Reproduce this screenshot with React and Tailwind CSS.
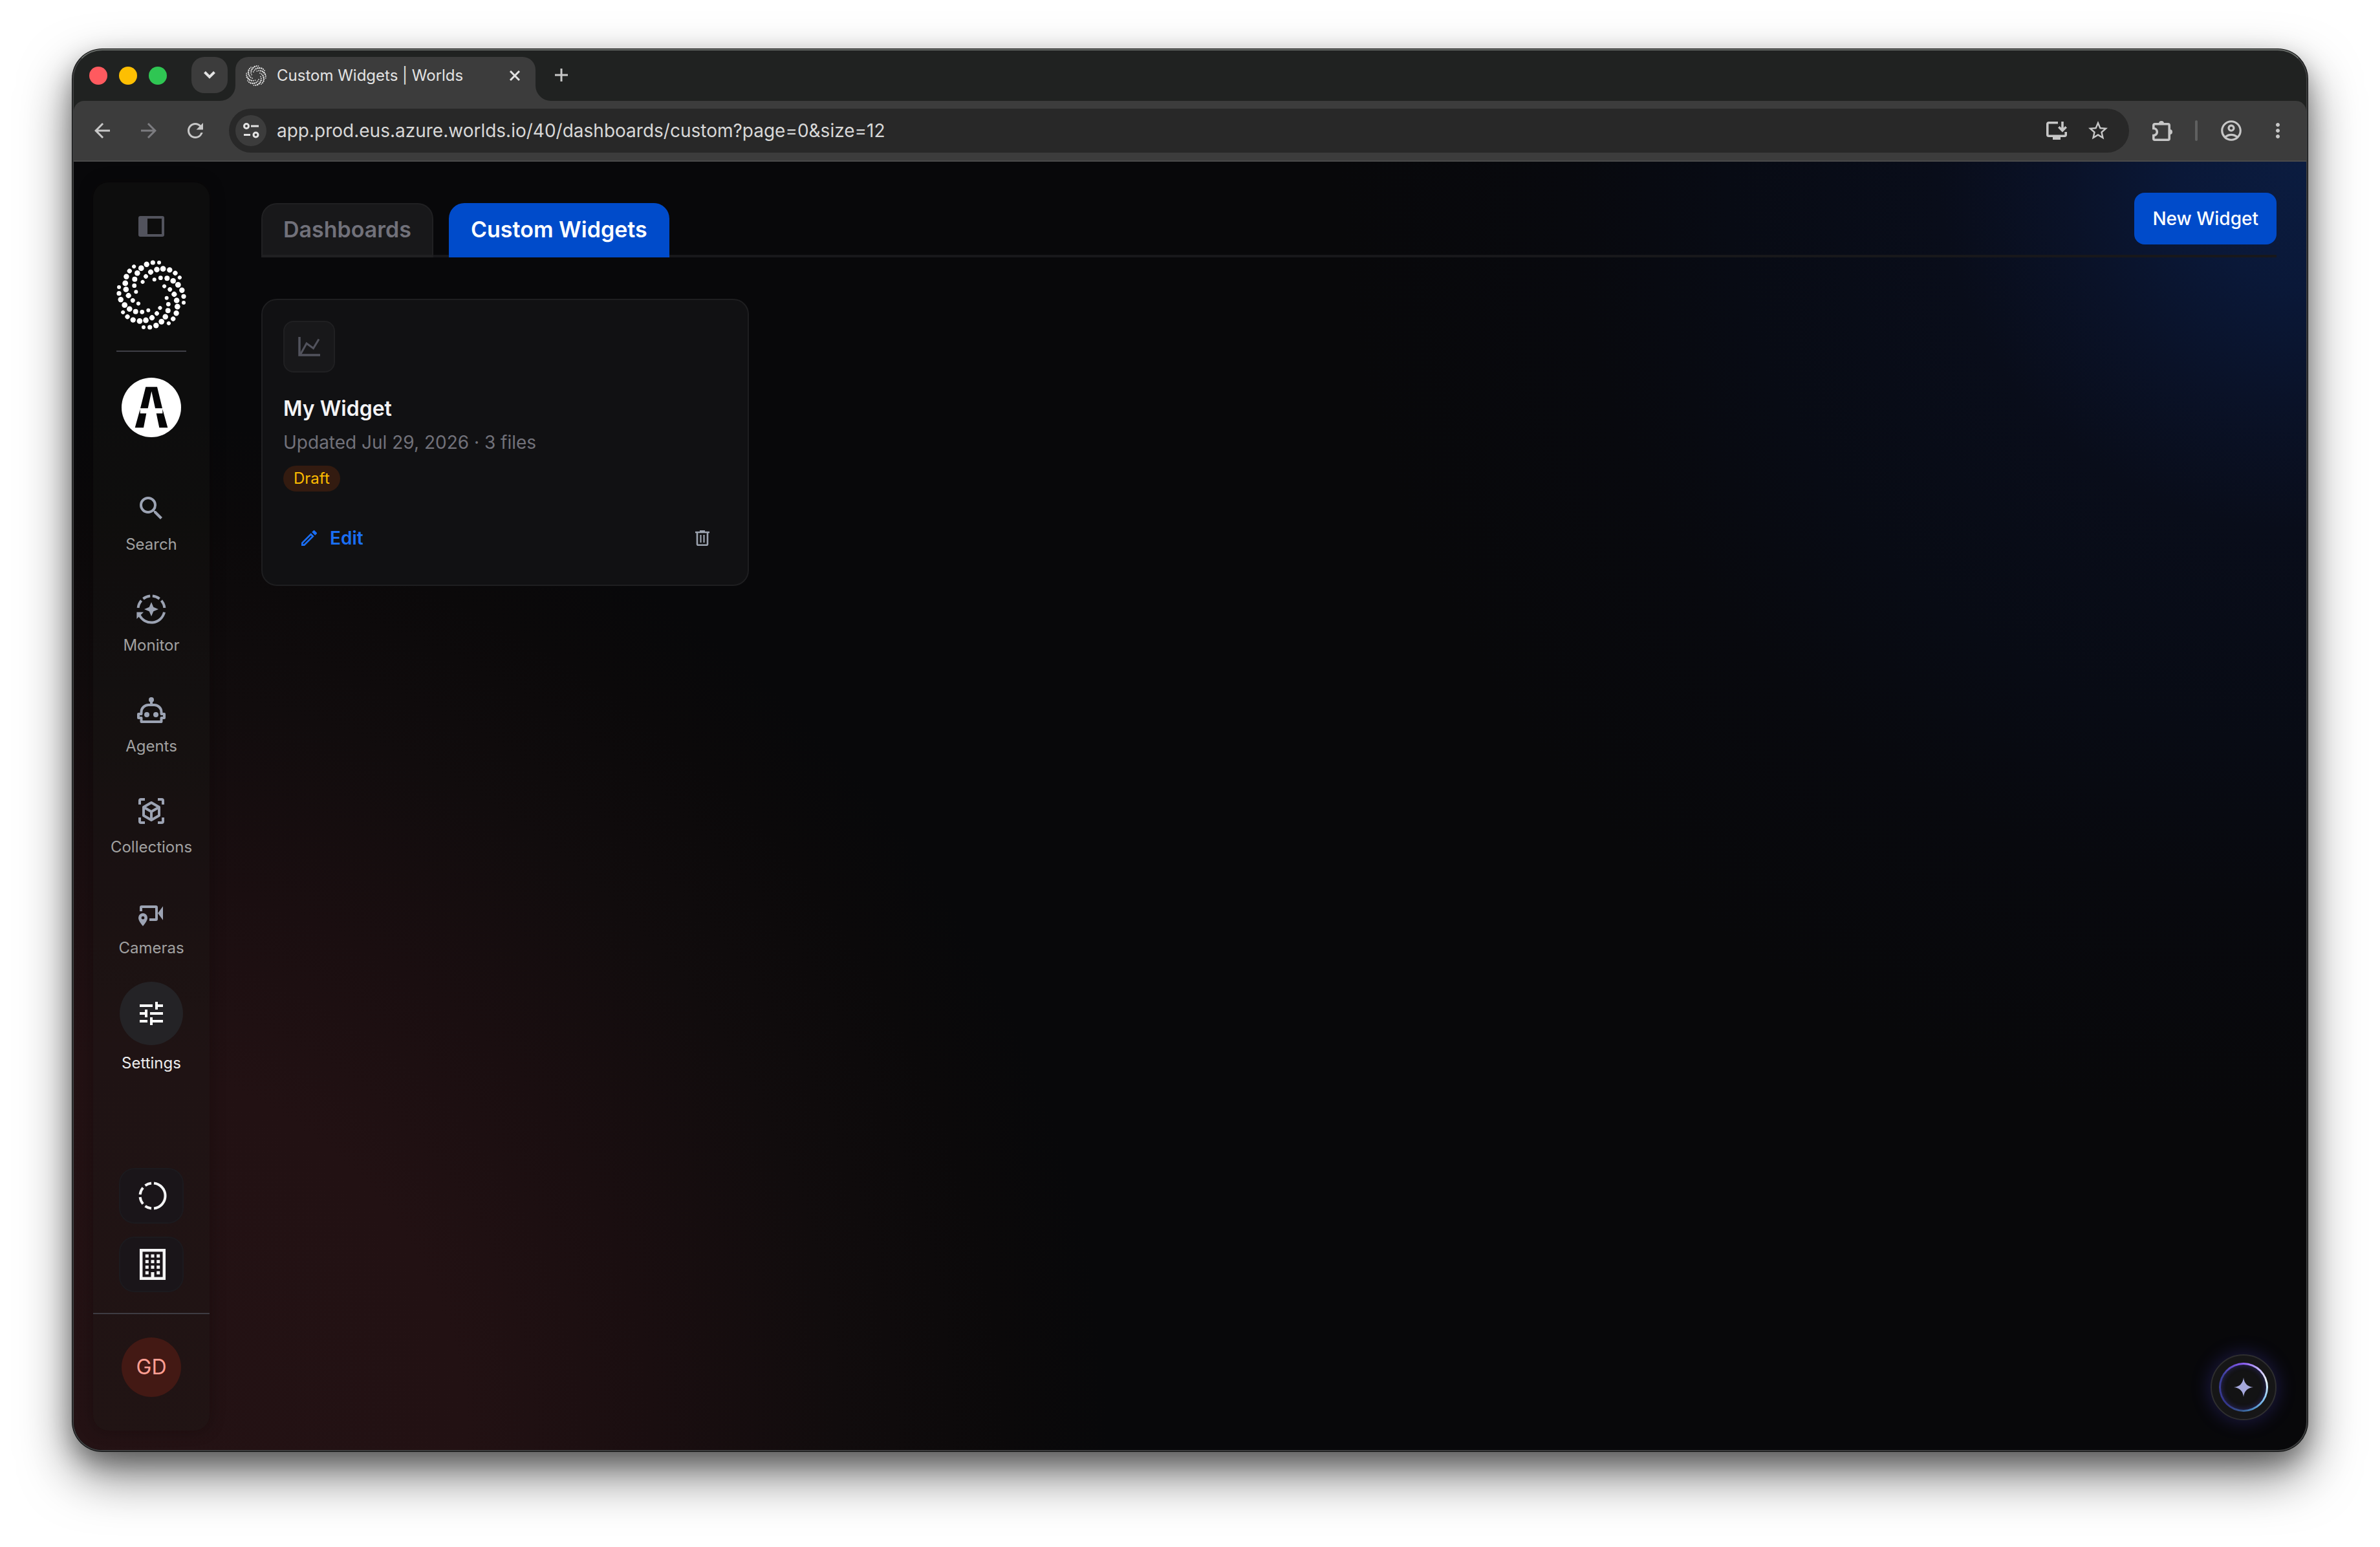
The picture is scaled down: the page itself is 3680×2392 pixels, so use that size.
import {
  MdArrowBack,
  MdArrowForward,
  MdMoreVert,
  MdOutlineAccountCircle,
  MdOutlineEdit,
  MdRefresh,
  MdSearch,
  MdStarBorder,
  MdTune,
} from "react-icons/md";

// one arm of the Worlds swirl, [x, y, radius] around the centre
const SWIRL_ARM = [
  [12, -50, 3],
  [2.3, -50, 3.6],
  [-7.3, -47.3, 4.2],
  [-15.7, -41.3, 4.4],
  [-21.7, -33.7, 4.3],
  [-25.7, -24.3, 4],
  [-26.3, -14.3, 3.4],
  [-23.7, -4.7, 3],
];

const SWIRL_ANGLES = [0, 45, 90, 135, 180, 225, 270, 315];

function WorldsLogo({ className }) {
  return (
    <svg viewBox="-54 -54 108 108" fill="currentColor" className={className}>
      {SWIRL_ANGLES.map((angle) => (
        <g key={angle} transform={`rotate(${angle})`}>
          {SWIRL_ARM.map(([x, y, r]) => (
            <circle key={`${x}${y}`} cx={x} cy={y} r={r} />
          ))}
        </g>
      ))}
    </svg>
  );
}

function TenantLogo() {
  return (
    <svg viewBox="0 0 92 92" className="size-[92px]">
      <circle cx="46" cy="46" r="46" fill="#fff" />
      <g fill="#060607">
        <path d="M37.3 14.3H55L63 47.3H52L46.3 21L40.7 47.3H29Z" />
        <path d="M28.7 48.5V55.3H38.3L34 77.3H20.7Z" />
        <path d="M63.3 48.5V55.3H53.7L58.3 77.3H71.3Z" />
      </g>
    </svg>
  );
}

function SidebarToggleIcon() {
  return (
    <svg viewBox="0 0 40 32" className="h-8 w-10">
      <rect x="2" y="2" width="36" height="28" rx="1" fill="none" stroke="currentColor" strokeWidth="4" />
      <path d="M2 2H14V30H2Z" fill="currentColor" />
    </svg>
  );
}

function MonitorIcon() {
  return (
    <svg viewBox="0 0 48 48" className="size-12">
      <g fill="none" stroke="currentColor" strokeWidth="4">
        <path d="M3.6 21.9A20.5 20.5 0 0 1 8.5 10.6" />
        <path d="M11.4 7.8A20.5 20.5 0 0 1 22.2 3.6" />
        <path d="M25.8 3.6A20.5 20.5 0 0 1 36.6 7.8" />
        <path d="M39.5 10.6A20.5 20.5 0 0 1 44.4 21.9" />
        <path d="M44 28.6A20.5 20.5 0 0 1 5.4 32.7" />
      </g>
      <path d="M1.4 28.5H12L1.4 39Z" fill="currentColor" />
      <path
        d="M24 13L27.3 20.7L35 24L27.3 27.3L24 35L20.7 27.3L13 24L20.7 20.7Z"
        fill="currentColor"
      />
    </svg>
  );
}

function AgentsIcon() {
  return (
    <svg viewBox="0 0 48 48" className="size-12">
      <path
        d="M8.5 30H4V36H8.5V42H39.5V36H44V30H39.5V27A11 11 0 0 0 28.5 16H19.5A11 11 0 0 0 8.5 27Z"
        fill="none"
        stroke="currentColor"
        strokeWidth="4"
        strokeLinejoin="round"
      />
      <path d="M24 8V15" stroke="currentColor" strokeWidth="4" />
      <circle cx="24" cy="8" r="4" fill="currentColor" />
      <circle cx="17" cy="31" r="4" fill="currentColor" />
      <circle cx="31" cy="31" r="4" fill="currentColor" />
    </svg>
  );
}

function CollectionsIcon() {
  return (
    <svg viewBox="0 0 48 48" className="size-12" fill="none" stroke="currentColor" strokeWidth="4">
      <path d="M6 14V8A2 2 0 0 1 8 6H14M34 6H40A2 2 0 0 1 42 8V14M42 34V40A2 2 0 0 1 40 42H34M14 42H8A2 2 0 0 1 6 40V34" />
      <path
        d="M24 11L36 18V31L24 38L12 31V18ZM12 18L24 25L36 18M24 25V38"
        strokeLinejoin="round"
      />
    </svg>
  );
}

function CamerasIcon() {
  return (
    <svg viewBox="0 0 48 48" className="size-12" fill="currentColor">
      <path
        d="M8 23V17A1 1 0 0 1 9 16H31A1 1 0 0 1 32 17V35A1 1 0 0 1 31 36H21"
        fill="none"
        stroke="currentColor"
        strokeWidth="4"
      />
      <path d="M34 26L42 15.3V36.7Z" />
      <path
        fillRule="evenodd"
        d="M11 46C7 41 4 37 4 33A7 7 0 0 1 18 33C18 37 15 41 11 46ZM11 30.8A2.4 2.4 0 1 0 11 35.6A2.4 2.4 0 1 0 11 30.8Z"
      />
    </svg>
  );
}

function RingIcon() {
  return (
    <svg viewBox="0 0 48 48" className="size-12" fill="none" stroke="currentColor" strokeWidth="4">
      <path d="M26 4.6A19.5 19.5 0 0 1 26 43.4" />
      <path d="M22 4.6A19.5 19.5 0 0 0 12.5 8.2M9.1 11.5A19.5 19.5 0 0 0 4.6 22" />
      <path d="M22 43.4A19.5 19.5 0 0 1 12.5 39.8M9.1 36.5A19.5 19.5 0 0 1 4.6 26" />
    </svg>
  );
}

function BuildingIcon() {
  return (
    <svg viewBox="0 0 48 48" className="size-12" fill="currentColor">
      <rect x="6.2" y="2.2" width="35.6" height="43.6" fill="none" stroke="currentColor" strokeWidth="4.5" />
      {[8.5, 17.2, 25.8, 34.5].map((y) => (
        <g key={y}>
          <rect x="12.8" y={y} width="5" height="5" />
          {y < 30 ? <rect x="21.5" y={y} width="5" height="5" /> : null}
          <rect x="30.2" y={y} width="5" height="5" />
        </g>
      ))}
      <rect x="21.5" y="36" width="5" height="9" />
    </svg>
  );
}

function ChartLineIcon() {
  return (
    <svg viewBox="0 0 36 32" className="h-8 w-9" fill="none" stroke="currentColor">
      <path d="M3 1V29H35" strokeWidth="3.5" />
      <path d="M4.5 28L14 11L24.5 18.5L33 4.5" strokeWidth="3" />
    </svg>
  );
}

function TrashIcon() {
  return (
    <svg viewBox="0 0 22 24" className="h-6 w-[22px]" fill="none" stroke="currentColor">
      <path d="M0 3H22M7 1.2H15" strokeWidth="2.4" />
      <path d="M3 4V21.2A1.5 1.5 0 0 0 4.5 22.7H17.5A1.5 1.5 0 0 0 19 21.2V4" strokeWidth="2.6" />
      <path d="M8.5 7V19M13.5 7V19" strokeWidth="2.2" />
    </svg>
  );
}

function SiteInfoIcon() {
  return (
    <svg viewBox="0 0 32 32" className="size-8" fill="none" stroke="currentColor" strokeWidth="3">
      <circle cx="9" cy="9" r="3.5" />
      <path d="M16 9H28M5 22.5H15" />
      <circle cx="23.5" cy="22.5" r="3.5" />
    </svg>
  );
}

function InstallIcon() {
  return (
    <svg viewBox="0 0 32 28" className="h-7 w-8" fill="none" stroke="currentColor" strokeWidth="3.6">
      <path d="M18 1.8H3.8A2 2 0 0 0 1.8 3.8V20.2A2 2 0 0 0 3.8 22.2H28.2A2 2 0 0 0 30.2 20.2V16" />
      <path d="M25 0V14M19.3 8.3L25 14L30.7 8.3" />
      <path d="M10 23H22V28H10Z" fill="currentColor" stroke="none" />
    </svg>
  );
}

function ExtensionIcon() {
  return (
    <svg viewBox="0 0 32 32" className="size-8">
      <path
        d="M1.8 12.5V7.8A2 2 0 0 1 3.8 5.8H24.2A2 2 0 0 1 26.2 7.8V28.2A2 2 0 0 1 24.2 30.2H3.8A2 2 0 0 1 1.8 28.2V23.5A5.4 5.4 0 0 0 1.8 12.5Z"
        fill="none"
        stroke="currentColor"
        strokeWidth="3.6"
      />
      <path d="M10 5A4 4 0 0 1 18 5ZM27 14A4 4 0 0 1 27 22Z" fill="currentColor" />
    </svg>
  );
}

const NAV_ITEMS = [
  { label: "Search", icon: <MdSearch size={48} /> },
  { label: "Monitor", icon: <MonitorIcon /> },
  { label: "Agents", icon: <AgentsIcon /> },
  { label: "Collections", icon: <CollectionsIcon /> },
  { label: "Cameras", icon: <CamerasIcon /> },
];

function TabStrip() {
  return (
    <div className="flex h-[78px] items-end pl-6">
      <div className="flex h-full items-center gap-[18px]">
        <button aria-label="Close window" className="size-7 rounded-full bg-[#ff5a5f]" />
        <button aria-label="Minimize window" className="size-7 rounded-full bg-[#fdbf02]" />
        <button aria-label="Zoom window" className="size-7 rounded-full bg-[#2fc653]" />
      </div>

      <button
        aria-label="Search tabs"
        className="mb-3 ml-[38px] flex size-14 items-center justify-center rounded-[20px] bg-[#3c3c3c] text-[#e3e3e3]"
      >
        <svg viewBox="0 0 18 12" className="h-3 w-[18px]" fill="none" stroke="currentColor" strokeWidth="4">
          <path d="M1.5 1.5L9 9L16.5 1.5" />
        </svg>
      </button>

      <div className="relative ml-3 flex h-[68px] w-[464px] items-center rounded-t-[20px] bg-[#3c3c3c] pr-6 pb-[10px] pl-4 text-[#e3e3e3]">
        <svg viewBox="0 0 24 24" className="absolute bottom-0 -left-6 size-6" fill="#3c3c3c">
          <path d="M24 0V24H0A24 24 0 0 0 24 0Z" />
        </svg>
        <svg viewBox="0 0 24 24" className="absolute -right-6 bottom-0 size-6" fill="#3c3c3c">
          <path d="M0 0V24H24A24 24 0 0 1 0 0Z" />
        </svg>
        <WorldsLogo className="size-8" />
        <span className="ml-4 flex-1 text-[24px] leading-8">Custom Widgets | Worlds</span>
        <button aria-label="Close tab">
          <svg viewBox="0 0 16 16" className="size-4" stroke="currentColor" strokeWidth="3">
            <path d="M1 1L15 15M15 1L1 15" />
          </svg>
        </button>
      </div>

      <button aria-label="New tab" className="mb-[30px] ml-[30px] text-[#c7c7c7]">
        <svg viewBox="0 0 20 20" className="size-5" stroke="currentColor" strokeWidth="3">
          <path d="M10 0V20M0 10H20" />
        </svg>
      </button>
    </div>
  );
}

function Toolbar() {
  return (
    <div className="flex h-[94px] items-center rounded-t-[16px] border-b-2 border-[#4a4a4a] bg-[#3c3c3c] px-5 text-[#c7c7c7]">
      <div className="flex gap-6">
        <button aria-label="Back" className="flex size-12 items-center justify-center">
          <MdArrowBack size={36} />
        </button>
        <button aria-label="Forward" className="flex size-12 items-center justify-center text-[#7c7c80]">
          <MdArrowForward size={36} />
        </button>
        <button aria-label="Reload" className="flex size-12 items-center justify-center">
          <MdRefresh size={36} />
        </button>
      </div>

      <div className="ml-7 flex h-[68px] flex-1 items-center rounded-full bg-[#282828] pr-6 pl-[10px]">
        <button
          aria-label="Site information"
          className="flex size-12 items-center justify-center rounded-full bg-[#3c3c3c] text-[#e3e3e3]"
        >
          <SiteInfoIcon />
        </button>
        <input
          type="text"
          aria-label="Address"
          defaultValue="app.prod.eus.azure.worlds.io/40/dashboards/custom?page=0&size=12"
          className="ml-4 min-w-0 flex-1 bg-transparent text-[28px] text-[#d8d8d8] outline-none"
        />
        <button aria-label="Install app" className="flex size-12 items-center justify-center">
          <InstallIcon />
        </button>
        <button aria-label="Bookmark this page" className="ml-4 flex size-12 items-center justify-center">
          <MdStarBorder size={36} />
        </button>
      </div>

      <button aria-label="Extensions" className="ml-7 flex size-12 items-center justify-center">
        <ExtensionIcon />
      </button>
      <span className="mr-7 ml-[26px] h-8 w-1 rounded-full bg-[#5f6060]" />
      <button aria-label="Profile" className="flex size-12 items-center justify-center">
        <MdOutlineAccountCircle size={38} />
      </button>
      <button aria-label="Menu" className="ml-6 flex size-12 items-center justify-center">
        <MdMoreVert size={36} />
      </button>
    </div>
  );
}

function Sidebar() {
  return (
    <aside className="flex w-[180px] shrink-0 flex-col items-center rounded-[24px] bg-[#1a1a18]/30 py-[52px] shadow-[0_0_24px_rgba(10,6,4,0.3)]">
      <button aria-label="Toggle sidebar" className="text-[#52535d]">
        <SidebarToggleIcon />
      </button>
      <WorldsLogo className="mt-9 size-[108px] text-white" />
      <hr className="mt-8 w-[108px] border-t-2 border-[#3f3f46]" />
      <button aria-label="Switch tenant" className="mt-10">
        <TenantLogo />
      </button>

      <nav className="mt-14 flex w-full flex-col text-[24px] leading-8">
        {NAV_ITEMS.map((item) => (
          <a
            key={item.label}
            href={`#${item.label.toLowerCase()}`}
            className="flex flex-col items-center gap-4 py-[30px] text-[#a1a1a1]"
          >
            <span className="text-[#9ca3b3]">{item.icon}</span>
            {item.label}
          </a>
        ))}
        <a href="#settings" className="flex flex-col items-center gap-3 pt-[6px] text-[#ededed]">
          <span className="flex size-[98px] items-center justify-center rounded-full bg-[#242326] text-white">
            <MdTune size={48} />
          </span>
          Settings
        </a>
      </nav>

      <div className="mt-auto flex w-full flex-col items-center gap-5 border-b-2 border-[#3e3c42] pb-8 text-[#f4f4f5]">
        <button
          aria-label="Activity"
          className="flex h-[86px] w-[100px] items-center justify-center rounded-[24px] border-2 border-[#1c1a1e] bg-[#1a1519] pl-1"
        >
          <RingIcon />
        </button>
        <button
          aria-label="Sites"
          className="flex h-[86px] w-[100px] items-center justify-center rounded-[24px] border-2 border-[#1c1a1e] bg-[#1a1519] pl-1"
        >
          <BuildingIcon />
        </button>
      </div>
      <button className="mt-9 size-[92px] rounded-full bg-[#431914] text-[32px] text-[#ff9f93]">
        GD
      </button>
    </aside>
  );
}

function WidgetCard() {
  return (
    <article className="flex flex-col items-start rounded-[24px] border-2 border-[#1e1e20] bg-[#111113] px-8 pt-8 pb-9">
      <div className="flex size-20 items-center justify-center rounded-2xl border-2 border-[#202022] bg-[#18181a] text-[#52535d]">
        <ChartLineIcon />
      </div>
      <h2 className="mt-8 text-[32px] leading-[48px] font-semibold text-[#f4f4f5]">My Widget</h2>
      <p className="mt-1 text-[28px] leading-[48px] text-[#71717a]">
        Updated Jul 29, 2026 · 3 files
      </p>
      <span className="mt-3 rounded-full bg-[#331b10] px-4 text-[24px] leading-10 text-[#fcbb00]">
        Draft
      </span>
      <div className="mt-9 flex w-full items-center justify-between pr-3 pl-6">
        <button className="flex h-[72px] items-center gap-4 text-[28px] font-semibold text-[#1a6ef5]">
          <MdOutlineEdit size={32} />
          Edit
        </button>
        <button aria-label="Delete widget" className="flex size-[52px] items-center justify-center text-[#9ca3af]">
          <TrashIcon />
        </button>
      </div>
    </article>
  );
}

function AssistantButton() {
  return (
    <button
      aria-label="Open assistant"
      className="absolute right-[46px] bottom-[46px] flex size-[102px] items-center justify-center rounded-full border-2 border-[#2e2e2f] bg-[#161617] shadow-[0_0_30px_rgba(79,70,229,0.3)]"
    >
      <span className="flex size-[76px] items-center justify-center rounded-full bg-[conic-gradient(#8b5cf6,#c4b5fd_40deg,#f0f9ff_75deg,#8ecbf5_115deg,#4e8fc8_155deg,#34568a_185deg,#34368a_225deg,#3b3f9a_300deg,#8b5cf6)]">
        <span className="flex size-[70px] items-center justify-center rounded-full bg-[#131314] shadow-[inset_0_0_8px_rgba(79,70,229,0.4)]">
          <svg viewBox="0 0 30 30" className="size-[30px]" fill="#a5a8dc">
            <path d="M15 0Q16.5 13.5 30 15Q16.5 16.5 15 30Q13.5 16.5 0 15Q13.5 13.5 15 0Z" />
          </svg>
        </span>
      </span>
    </button>
  );
}

function App() {
  return (
    <div className="flex min-h-screen flex-col bg-white px-28 pt-[76px] pb-[148px] font-[Inter,'Liberation_Sans',sans-serif]">
      <div className="flex flex-1 flex-col overflow-hidden rounded-[46px] border-2 border-[#3d3e3f] border-t-[#6a6e6b] bg-[#202221] shadow-[0_0_0_1px_#0c0d0d,0_16px_36px_rgba(0,0,0,0.3),0_36px_80px_rgba(0,0,0,0.55)]">
        <TabStrip />
        <Toolbar />

        <div className="relative flex flex-1 bg-[#08080a] bg-[radial-gradient(1500px_1500px_at_100%_0%,#0b1c40,#0a1838_13%,#0a1228_25%,#090d1a_38%,#080b14_60%,#08090e_76%,transparent),radial-gradient(1600px_1600px_at_0%_100%,#241214,#221113_38%,#1a0e10_56%,#110c0d_74%,#0b090a_90%,transparent)] px-[30px] pt-8 pb-[30px]">
          <Sidebar />

          <main className="ml-20 min-w-0 flex-1 pt-4 pr-4">
            <div className="flex items-start justify-between border-b-4 border-[#18181b]">
              <div className="-mb-1 flex gap-6 self-end text-[34px] leading-[78px] font-semibold">
                <button className="rounded-t-[24px] border-2 border-b-4 border-[#202022] bg-[#18181a] px-8 text-[#71717a]">
                  Dashboards
                </button>
                <button className="rounded-t-[24px] border-2 border-b-4 border-[#004bca] bg-[#004bca] px-8 text-white">
                  Custom Widgets
                </button>
              </div>
              <button className="mb-4 h-20 rounded-2xl bg-[#004bca] px-7 text-[28px] font-medium text-white">
                New Widget
              </button>
            </div>

            <div className="mt-16 grid grid-cols-4 gap-[34px]">
              <WidgetCard />
            </div>
          </main>

          <AssistantButton />
        </div>
      </div>
    </div>
  );
}

export default App;
